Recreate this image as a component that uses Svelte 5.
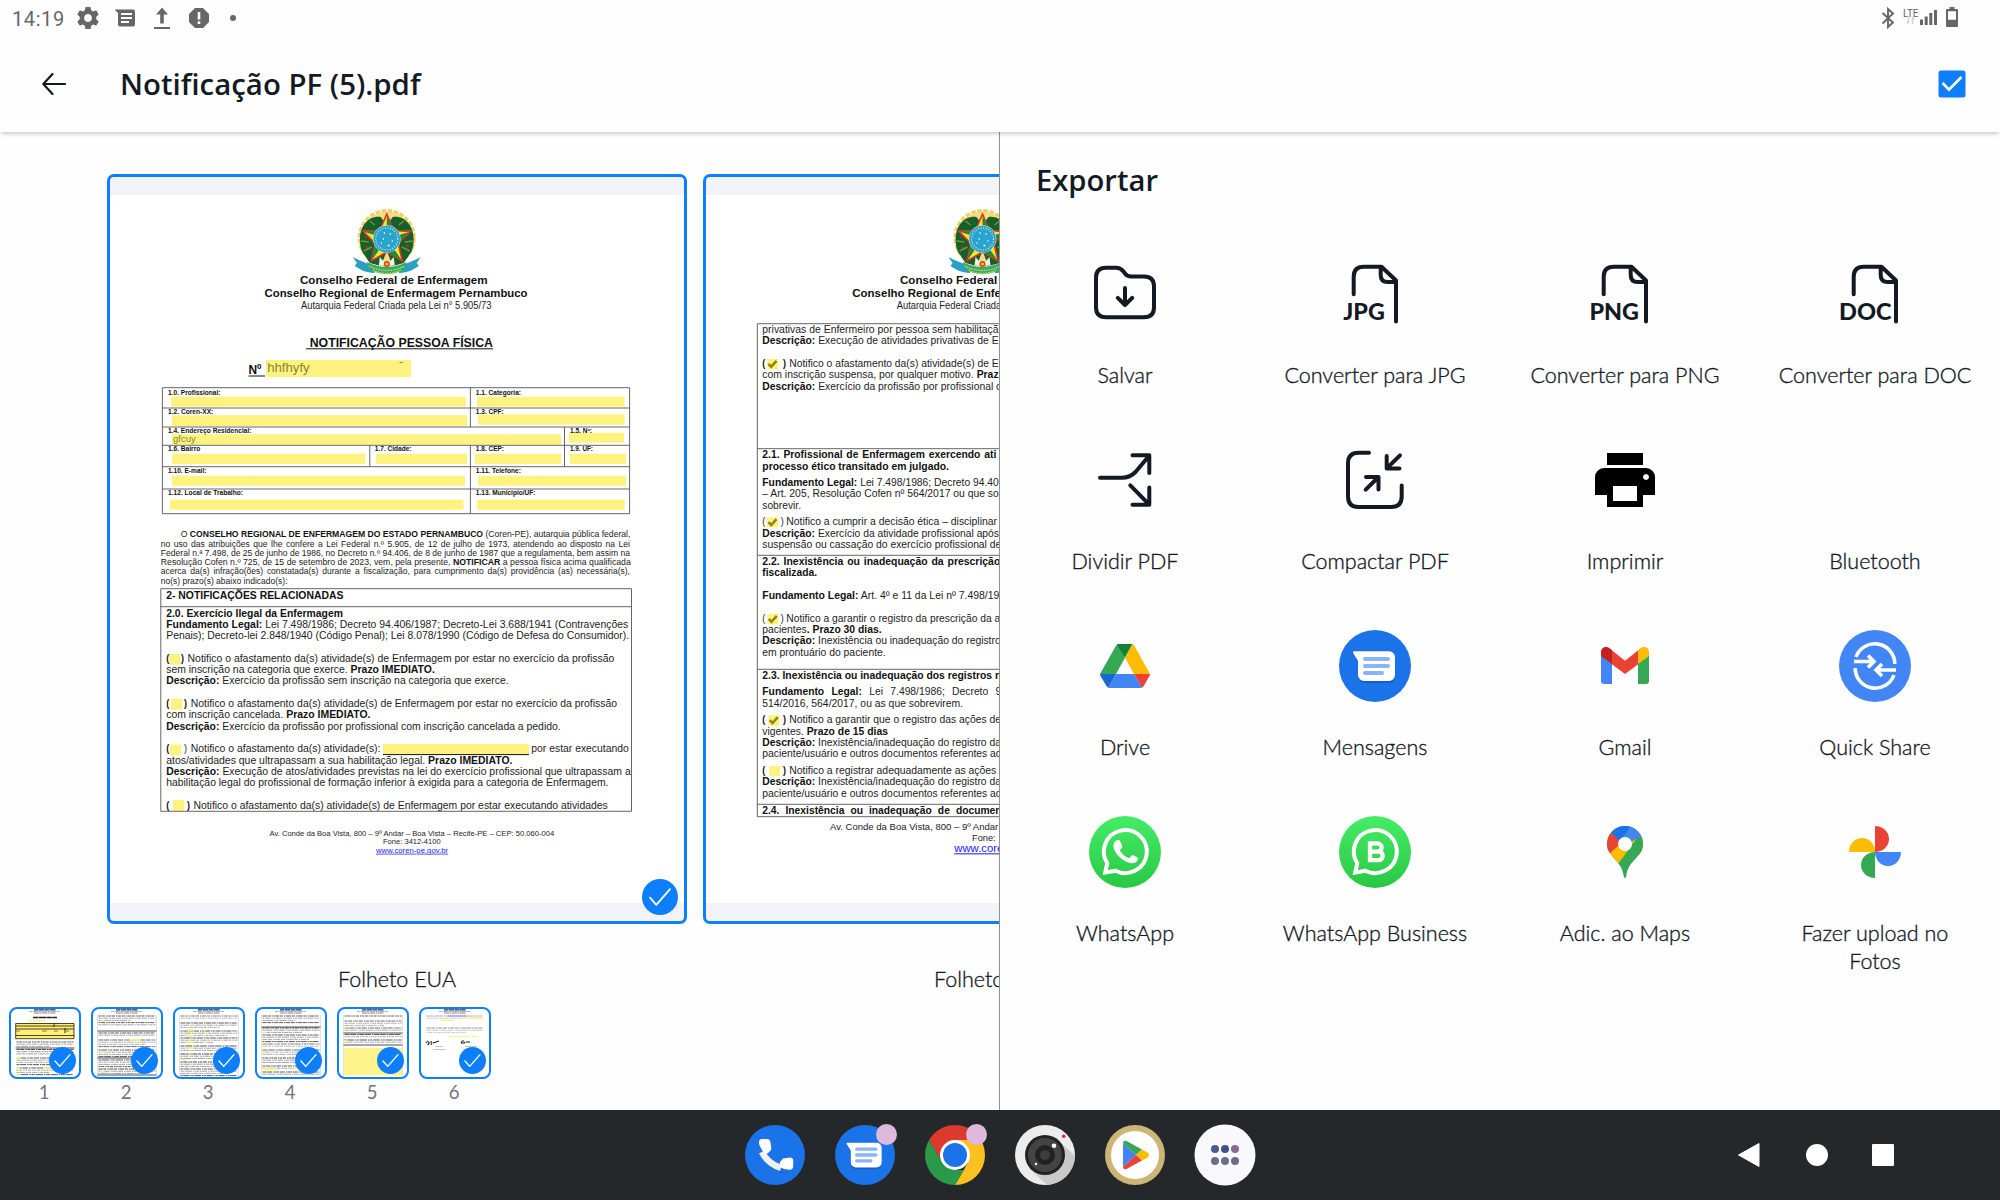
<script>
  // Text rows of a document page: [x, baseline, width, size, text]; *…* marks bold runs.
  const formLabels = [
    [168, 394.7, 52.5, '1.0. Profissional:'], [475.8, 394.7, 45.2, '1.1. Categoria:'],
    [168, 414.3, 45.3, '1.2. Coren-XX:'], [475.8, 414.3, 28, '1.3. CPF:'],
    [168, 433.3, 83.5, '1.4. Endereço Residencial:'], [570, 433.3, 22, '1.5. Nº:'],
    [168, 451.3, 32.3, '1.6. Bairro'], [374.8, 451.3, 36.7, '1.7. Cidade:'],
    [475.8, 451.3, 28.2, '1.8. CEP:'], [570, 451.3, 23, '1.9. UF:'],
    [168, 472.7, 38.4, '1.10. E-mail:'], [475.8, 472.7, 45.2, '1.11. Telefone:'],
    [168, 495.3, 75, '1.12. Local de Trabalho:'], [475.8, 495.3, 59.7, '1.13. Município/UF:']
  ].map(([x, y, w, t]) => [x, y, w, 6.4, `*${t}*`]);

  const pages = [
    {
      left: 107,
      dx: 0,
      texts: [
        [300, 283.7, 187.5, 11.3, '*Conselho Federal de Enfermagem*'],
        [264.5, 296.5, 263, 11.3, '*Conselho Regional de Enfermagem Pernambuco*'],
        [301, 309.3, 190.5, 11, 'Autarquia Federal Criada pela Lei n° 5.905/73'],
        [309.7, 346.7, 183.3, 12.4, '*NOTIFICAÇÃO PESSOA FÍSICA*'],
        [248.5, 373.5, 13, 12, '*Nº*'],
        ...formLabels,
        [180.7, 537.3, 449.7, 8.4, 'O *CONSELHO REGIONAL DE ENFERMAGEM DO ESTADO PERNAMBUCO* (Coren-PE), autarquia pública federal,'],
        [160.8, 546.7, 469.2, 8.4, 'no uso das atribuições que lhe confere a Lei Federal n.º 5.905, de 12 de julho de 1973, atendendo ao disposto na Lei', 1],
        [160.8, 556, 469.2, 8.4, 'Federal n.ª 7.498, de 25 de junho de 1986, no Decreto n.º 94.406, de 8 de junho de 1987 que a regulamenta, bem assim na'],
        [160.8, 565, 470, 8.4, 'Resolução Cofen n.º 725, de 15 de setembro de 2023, vem, pela presente, *NOTIFICAR* a pessoa física acima qualificada'],
        [160.8, 574.3, 469.2, 8.4, 'acerca da(s) infração(ões) constatada(s) durante a fiscalização, para cumprimento da(s) providência (as) necessária(s),', 1.5],
        [160.8, 584, 126.7, 8.4, 'no(s) prazo(s) abaixo indicado(s):'],
        [166.2, 598.7, 177.2, 10.4, '*2- NOTIFICAÇÕES RELACIONADAS*'],
        [166.2, 616.7, 176.8, 10.4, '*2.0. Exercício Ilegal da Enfermagem*'],
        [166.2, 627.7, 462, 10.4, '*Fundamento Legal:* Lei 7.498/1986; Decreto 94.406/1987; Decreto-Lei 3.688/1941 (Contravenções'],
        [166.2, 639, 463, 10.4, 'Penais); Decreto-lei 2.848/1940 (Código Penal); Lei 8.078/1990 (Código de Defesa do Consumidor).'],
        [166.2, 662, 3, 10.4, '*(*'], [181, 662, 3, 10.4, '*)*'],
        [187.6, 662, 426.7, 10.4, 'Notifico o afastamento da(s) atividade(s) de Enfermagem por estar no exercício da profissão'],
        [166.2, 673, 268.6, 10.4, 'sem inscrição na categoria que exerce. *Prazo IMEDIATO.*'],
        [166.2, 684.3, 342.5, 10.4, '*Descrição:* Exercício da profissão sem inscrição na categoria que exerce.'],
        [166.2, 707, 3, 10.4, '*(*'], [184, 707, 3, 10.4, '*)*'],
        [190.7, 707, 426.3, 10.4, 'Notifico o afastamento da(s) atividade(s) de Enfermagem por estar no exercício da profissão'],
        [166.2, 718.3, 204.3, 10.4, 'com inscrição cancelada. *Prazo IMEDIATO.*'],
        [166.2, 730, 394.5, 10.4, '*Descrição:* Exercício da profissão por profissional com inscrição cancelada a pedido.'],
        [166.2, 752.3, 3, 10.4, '*(*'], [184, 752.3, 3, 10.4, ')'],
        [190.7, 752.3, 189.8, 10.4, 'Notifico o afastamento da(s) atividade(s):'],
        [531.3, 752.3, 97.5, 10.4, 'por estar executando'],
        [166.2, 763.7, 346.3, 10.4, 'atos/atividades que ultrapassam a sua habilitação legal. *Prazo IMEDIATO.*'],
        [166.2, 774.7, 464.5, 10.4, '*Descrição:* Execução de atos/atividades previstas na lei do exercício profissional que ultrapassam a'],
        [166.2, 786.3, 442.3, 10.4, 'habilitação legal do profissional de formação inferior à exigida para a categoria de Enfermagem.'],
        [166.2, 809, 3, 10.4, '*(*'], [187, 809, 3, 10.4, '*)*'],
        [193.4, 809, 414.4, 10.4, 'Notifico o afastamento da(s) atividade(s) de Enfermagem por estar executando atividades'],
        [269.5, 836, 284.7, 7.6, 'Av. Conde da Boa Vista, 800 – 9º Andar – Boa Vista – Recife-PE – CEP: 50.060-004'],
        [383, 844.3, 57.6, 7.6, 'Fone: 3412-4100']
      ],
      links: [[376, 852.7, 72, 7.6, 'www.coren-pe.gov.br']],
      highlights: [
        [266, 360, 145, 17],
        [171.2, 396.7, 294.6, 10], [477, 396.7, 147.6, 10],
        [172, 415.3, 295, 10.7], [478, 414.3, 146.6, 10.4],
        [172, 434.3, 389, 10.3], [569, 432.7, 55, 10],
        [172, 453.7, 193.2, 10.3], [376, 453.7, 91, 10.3], [475, 453.7, 86, 10.3], [570, 453.7, 56, 10.3],
        [172, 475.7, 293, 10], [478, 475.7, 148, 10],
        [170, 499.7, 293.5, 10], [477, 499.7, 147.6, 10],
        [169.2, 654, 11.2, 10.7], [171, 699, 11, 10.7], [170, 744.7, 11.2, 10.3],
        [383, 744, 146, 10.3], [173, 800, 11.2, 10.7]
      ],
      typed: [[267.2, 372.3, 42.5, 13.5, 'hhfhyfy'], [173, 442, 22.7, 9.6, 'gfcuy'], [399, 366, 4, 12, '-']],
      ticks: [],
      rules: 'M306 348.8H493M248.5 376H265M383 754.6H529',
      grid: 'M162.4 387.7H629.6V513.7H162.4ZM162.4 408H629.6M162.4 427H629.6M162.4 445.3H629.6M162.4 466.7H629.6M162.4 489H629.6M470.4 387.7V427M470.4 445.3V513.7M564.5 427V466.7M369.8 445.3V466.7M160.8 588.7H631.5V811.3H160.8ZM160.8 606.7H631.5'
    },
    {
      left: 703,
      dx: 595.7,
      texts: [
        [900, 283.7, 187.5, 11.3, '*Conselho Federal de Enfermagem*'],
        [852.3, 296.5, 266, 11.3, '*Conselho Regional de Enfermagem Pernambuco*'],
        [896.7, 309.3, 190.5, 11, 'Autarquia Federal Criada pela Lei n° 5.905/73'],
        [762.3, 333, 236.3, 10.4, 'privativas de Enfermeiro por pessoa sem habilitaçã'],
        [762.3, 344.3, 236.3, 10.4, '*Descrição:* Execução de atividades privativas de E'],
        [762.3, 367, 3, 10.4, '*(*'], [783, 367, 3, 10.4, '*)*'],
        [789.3, 367, 209.4, 10.4, 'Notifico o afastamento da(s) atividade(s) de E'],
        [762.3, 378.3, 236.3, 10.4, 'com inscrição suspensa, por qualquer motivo. *Praz*'],
        [762.3, 389.7, 239, 10.4, '*Descrição:* Exercício da profissão por profissional c'],
        [762.3, 458, 234, 10.4, '*2.1. Profissional de Enfermagem exercendo ati*', 1],
        [762.3, 469.7, 186.7, 10.4, '*processo ético transitado em julgado.*'],
        [762.3, 486, 236.5, 10.4, '*Fundamento Legal:* Lei 7.498/1986; Decreto 94.40'],
        [762.3, 497, 236.5, 10.4, '– Art. 205, Resolução Cofen nº 564/2017 ou que so'],
        [762.3, 508.7, 38.7, 10.4, 'sobrevir.'],
        [762.3, 525.3, 3, 10.4, '('], [780.7, 525.3, 3, 10.4, ')'],
        [786.3, 525.3, 210.7, 10.4, 'Notifico a cumprir a decisão ética – disciplinar'],
        [762.3, 536.7, 236.7, 10.4, '*Descrição:* Exercício da atividade profissional após'],
        [762.3, 548, 239, 10.4, 'suspensão ou cassação do exercício profissional de'],
        [762.3, 565, 238, 10.4, '*2.2. Inexistência ou inadequação da prescrição*', 1],
        [762.3, 576, 54.7, 10.4, '*fiscalizada.*'],
        [762.3, 599, 237, 10.4, '*Fundamento Legal:* Art. 4º e 11 da Lei nº 7.498/19'],
        [762.3, 622, 3, 10.4, '('], [780.7, 622, 3, 10.4, ')'],
        [786.3, 622, 214, 10.4, 'Notifico a garantir o registro da prescrição da a'],
        [762.3, 632.7, 119.4, 10.4, 'pacientes*. Prazo 30 dias.*'],
        [762.3, 644.3, 238.4, 10.4, '*Descrição:* Inexistência ou inadequação do registro'],
        [762.3, 655.7, 123.4, 10.4, 'em prontuário do paciente.'],
        [762.3, 678.7, 239, 10.4, '*2.3. Inexistência ou inadequação dos registros n*'],
        [762.3, 695.3, 239, 10.4, '*Fundamento Legal:* Lei 7.498/1986; Decreto 9', 4.5],
        [762.3, 706.7, 200.7, 10.4, '514/2016, 564/2017, ou as que sobrevirem.'],
        [762.3, 723.3, 3, 10.4, '*(*'], [783, 723.3, 3, 10.4, '*)*'],
        [789.3, 723.3, 211.7, 10.4, 'Notifico a garantir que o registro das ações de'],
        [762.3, 735, 125.7, 10.4, 'vigentes. *Prazo de 15 dias*'],
        [762.3, 746, 238.7, 10.4, '*Descrição:* Inexistência/inadequação do registro da'],
        [762.3, 757.3, 239.3, 10.4, 'paciente/usuário e outros documentos referentes ao'],
        [762.3, 774, 3, 10.4, '*(*'], [783, 774, 3, 10.4, '*)*'],
        [789.3, 774, 207, 10.4, 'Notifico a registrar adequadamente as ações'],
        [762.3, 785.3, 238.7, 10.4, '*Descrição:* Inexistência/inadequação do registro da'],
        [762.3, 797, 239.3, 10.4, 'paciente/usuário e outros documentos referentes ao'],
        [762.3, 814, 239.3, 10.4, '*2.4. Inexistência ou inadequação de documen*', 3.2],
        [830, 830.3, 168.3, 9, 'Av. Conde da Boa Vista, 800 – 9º Andar'],
        [972, 841, 23.7, 9, 'Fone:']
      ],
      links: [[954.3, 852.3, 49, 10.4, 'www.core']],
      highlights: [
        [767, 359, 11, 10], [767, 517.3, 11, 10], [767.3, 614, 11, 10.3],
        [768.3, 715.3, 11, 10.4], [769.3, 766, 10.7, 10]
      ],
      typed: [],
      ticks: [[767, 359], [767, 517.3], [767.3, 614], [768.3, 715.3]],
      rules: '',
      grid: 'M1002 323.7H757.3V816.7H1002M757.3 448.7H1002M757.3 555.3H1002M757.3 669.3H1002M757.3 804.3H1002'
    }
  ];

  const runs = (t) => t.split('*').map((text, i) => ({ text, bold: i % 2 === 1 })).filter((r) => r.text);

  // Thumbnails: bands of tiny text lines as [from, to, strokeWidth], plus highlighted areas.
  const thumbs = [
    { bands: [[33, 38, 0.9], [40.5, 46, 1], [49, 56, 0.9], [59, 66, 0.9]], rules: [39], marks: [[17, 11, 17, 1.6], [5, 48, 4, 2], [5, 58, 4, 2], [32, 58, 9, 1.8], [5, 65, 4, 2]], form: true },
    { bands: [[7, 16, 0.9], [24, 28, 0.9], [31, 38, 0.8], [41, 48, 0.9], [51, 58, 0.9], [60, 65, 1]], rules: [22, 49, 66], marks: [[8, 11, 3, 2], [36, 30, 12, 1.8], [7, 42, 4, 2], [7, 62, 4, 2]] },
    { bands: [[7, 10, 0.7], [14, 20, 0.9], [22, 27, 0.9], [29, 35, 0.9], [37, 42, 0.9], [45, 51, 1], [53, 58, 1], [60, 67, 0.9]], rules: [], marks: [[11, 20, 8, 1.8], [28, 20, 3, 1.8], [11, 26, 8, 1.8], [28, 26, 3, 1.8], [11, 32, 8, 1.8], [28, 32, 3, 1.8], [11, 38, 8, 1.8], [7, 50, 3, 2]] },
    { bands: [[7, 15, 0.9], [19, 24, 1], [26, 33, 0.9], [35, 39, 0.7], [41, 46, 0.8], [49, 55, 1], [57, 61, 0.9], [63, 67, 0.9]], rules: [18], marks: [[5, 23, 4, 1.5], [5, 36, 4, 1.5], [5, 42, 4, 1.5], [6, 59, 14, 2.4], [36, 59, 8, 1.6]] },
    { bands: [[7, 9, 0.9], [12, 17, 0.8], [19, 23, 0.8], [25.5, 29, 0.9], [31, 35, 0.9]], rules: [24, 36], marks: [[5, 17, 3, 1.8], [5, 31, 3, 1.8], [5, 39, 58, 27.5]] },
    { bands: [[7, 10, 0.5], [19, 25, 0.6]], rules: [], marks: [[40, 8.5, 22, 1.4], [19, 10.5, 14, 1.4], [28, 27, 20, 1.2], [50, 27, 7, 1.2]], signed: true }
  ];
  const rows = ([from, to]) => {
    const out = [];
    for (let y = from; y < to; y += 2.2) out.push(y);
    return out;
  };

  const actions = [
    ['save', 'Salvar'], ['jpg', 'Converter para JPG'], ['png', 'Converter para PNG'], ['doc', 'Converter para DOC'],
    ['split', 'Dividir PDF'], ['compress', 'Compactar PDF'], ['print', 'Imprimir'], ['none', 'Bluetooth'],
    ['drive', 'Drive'], ['messages', 'Mensagens'], ['gmail', 'Gmail'], ['share', 'Quick Share'],
    ['whatsapp', 'WhatsApp'], ['business', 'WhatsApp Business'], ['maps', 'Adic. ao Maps'], ['photos', 'Fazer upload no Fotos']
  ];
  const fileText = { jpg: ['JPG', 4.3, 41.5], png: ['PNG', 0.4, 49.5], doc: ['DOC', 0, 52.5] };
</script>

{#snippet tick(cls)}
  <svg class={cls} viewBox="0 0 36 36"><circle cx="18" cy="18" r="18" fill="#0d7ffd" /><path d="M8 18.7 14.3 25.8 28 10.2" fill="none" stroke="#fff" stroke-width="1.8" stroke-linecap="round" stroke-linejoin="round" /></svg>
{/snippet}

{#snippet crest()}
  <!-- drawn around its own origin, the centre of the star -->
  <circle r="26.5" cy="-1" fill="#f5dc85" />
  <circle r="27.5" cy="-1" fill="none" stroke="#f1cf63" stroke-width="3" stroke-dasharray="4.6 1.6" />
  <path d="M-6-22C-22-24-31-6-25 12L-17 24-6 27 0 12 6 27 17 24 25 12C31-6 22-24 6-22L0-14Z" fill="#17602c" />
  <path d="M-17-18-12-14M-24-8-18-8M-26 2-18 3M-23 12-15 8M17-18 12-14M24-8 18-8M26 2 18 3M23 12 15 8" stroke="#6d9a34" stroke-width="1.4" />
  <path d="M-21 8h3M19 7h3M-22-2h2M20-3h2" stroke="#b3272b" stroke-width="2" />
  <path d="M0-25 7-8.5 23.500-7.500 11.500 4.500 15.500 22 0 13-15.500 22-11.500 4.500-23.500-7.500-7-8.500Z" fill="#f7e528" stroke="#d9352a" stroke-width="1.6" />
  <path d="M0-23V0L7-8.500ZM22-7 0 0 11.500 4.500ZM14.500 20.500 0 0V13ZM-14.500 20.500 0 0-11.500 4.500ZM-22-7 0 0-7-8.500Z" fill="#1d8a3f" />
  <circle r="13.800" fill="#e0ebb0" />
  <circle r="13.300" fill="#2aa3cf" />
  <circle r="11" fill="none" stroke="#c6e6e6" stroke-width="1.200" stroke-dasharray="1.200 1.400" />
  <path d="M-3-6h1.200M3-5h1.200M-4 0h1.200M1 6.500h1.800M5 2h1M-6 4h1" stroke="#fff" stroke-width="1.300" />
  <path d="M-34 18-28 21-16 26-12 34C-22 34-27 30-32 27L-30 24Z" fill="#2a9fc4" />
  <path d="M34 18 28 21 16 26 12 34C22 34 27 30 32 27L30 24Z" fill="#2a9fc4" />
  <path d="M-20 23Q0 33 20 23L17 31Q0 39-17 31Z" fill="#39a86b" />
  <path d="M-18 27Q0 36 18 27M-14 31Q0 38 14 31" fill="none" stroke="#c6e052" stroke-width="1.300" stroke-dasharray="1.500 1" />
  <path d="M-7 18-1 25-8 27ZM7 18 1 25 8 27Z" fill="#eef2ea" />
  <circle cy="25" r="3" fill="#e0402c" /><circle cy="25" r="1.300" fill="#f7e528" />
{/snippet}

{#snippet bubble()}
  <path d="M14 21.300H50a6 6 0 0 1 6 6V45a6 6 0 0 1-6 6H25a6 6 0 0 1-6-6V31Z" fill="#0b4aa8" opacity=".45" transform="translate(0 2)" />
  <path d="M14.800 21.300H50a6 6 0 0 1 6 6V45a6 6 0 0 1-6 6H25a6 6 0 0 1-6-6V31L14 22.800Q13.600 21.300 14.800 21.300Z" fill="#fff" />
  <path d="M26 29H49M26 36H49M26 43H43" stroke="#8ab4f8" stroke-width="4" stroke-linecap="round" />
{/snippet}

<div class="screen">
  <div class="status">
    <span class="clock">14:19</span>
    <svg class="notes" viewBox="70 0 170 36" fill="#666">
      <path fill-rule="evenodd" d="M85.500 7h5l.7 3.200 2 1.200 3-1.100 2.500 4.300-2.400 2.200v2.400l2.400 2.200-2.500 4.300-3-1.100-2 1.200-.7 3.200h-5l-.7-3.200-2-1.200-3 1.100-2.500-4.300 2.400-2.200v-2.400l-2.400-2.200 2.500-4.300 3 1.100 2-1.200ZM88 14a4 4 0 1 0 .01 0Z" />
      <path fill-rule="evenodd" d="M114.500 9.500H133a2 2 0 0 1 2 2V24.500a2 2 0 0 1-2 2H120a2 2 0 0 1-2-2V13ZM121 13v2h11v-2ZM121 17v2h11v-2ZM121 21v2h8v-2Z" />
      <path d="M162 7.500 168 14.500H163.800V23.500H160.200V14.500H156ZM154 27H170V29H154Z" />
      <path fill-rule="evenodd" d="M195 8h8l6 6v8l-6 6h-8l-6-6v-8ZM197.700 12v7.500h2.600V12ZM197.700 21.300v2.600h2.600v-2.600Z" />
      <circle cx="233" cy="18" r="3" />
    </svg>
    <svg class="system" viewBox="1876 0 88 36" fill="#666">
      <path d="M1882.500 13 1893 22.500 1888 27V9L1893 13.500 1882.500 23.500" fill="none" stroke="#666" stroke-width="1.900" />
      <text x="1903" y="17" font-family="Roboto" font-size="10" textLength="15.500">LTE</text>
      <path d="M1908.500 16v7M1907 21.500l1.500 2M1912.500 24v-7M1914 19l-1.500-2" fill="none" stroke="#d2d2d2" stroke-width="1.400" />
      <path d="M1920 19.500h3V25h-3ZM1924.700 16.500h3V25h-3ZM1929.300 13h3V25h-3ZM1934 10h3V25h-3Z" />
      <path fill-rule="evenodd" d="M1949.500 7h5v2h2.500a1 1 0 0 1 1 1v16a1 1 0 0 1-1 1h-10a1 1 0 0 1-1-1V10a1 1 0 0 1 1-1h2.500ZM1948 11.200V19.700h8V11.200Z" />
    </svg>
  </div>

  <header>
    <svg class="back" viewBox="0 0 24 22"><path d="M23 11H1.500M10.500 1 1.300 11 10.500 21" fill="none" stroke="#141a24" stroke-width="2.200" stroke-linecap="round" stroke-linejoin="round" /></svg>
    <h1>Notificação PF (5).pdf</h1>
    <svg class="checkbox" viewBox="0 0 28 28"><rect x=".5" y=".5" width="27" height="27" rx="2.500" fill="#0d7ffd" /><path d="M4.500 13 11 19.600 23.500 7" fill="none" stroke="#fff" stroke-width="2.700" /></svg>
  </header>

  <main>
    <section class="preview">
      <div class="cards">
        {#each pages as page}
          <figure>
            <div class="card">
              <svg class="page" viewBox="{page.left + 3} 195 574 708">
                <g transform="translate({386.8 + page.dx} 239)">{@render crest()}</g>
                {#each page.highlights as [x, y, w, h]}<rect {x} {y} width={w} height={h} fill="#fff27f" />{/each}
                <path d={page.grid} fill="none" stroke="#555" stroke-width=".9" />
                <path d={page.rules} fill="none" stroke="#111" stroke-width="1" />
                {#each page.texts as [x, y, w, size, text, gap]}
                  <text {x} {y} font-size={size} textLength={w} lengthAdjust="spacingAndGlyphs" word-spacing={gap ?? 0}>{#each runs(text) as r}<tspan class:bold={r.bold}>{r.text}</tspan>{/each}</text>
                {/each}
                {#each page.typed as [x, y, w, size, text]}<text class="typed" {x} {y} font-size={size} textLength={w} lengthAdjust="spacingAndGlyphs">{text}</text>{/each}
                {#each page.links as [x, y, w, size, text]}<text class="link" {x} {y} font-size={size} textLength={w} lengthAdjust="spacingAndGlyphs">{text}</text>{/each}
                {#each page.ticks as [x, y]}<path transform="translate({x} {y})" d="M1.500 4.800 4.200 7.800 9.500 1.800" fill="none" stroke="#93880c" stroke-width="2.600" />{/each}
              </svg>
              {@render tick('badge')}
            </div>
            <figcaption>Folheto EUA</figcaption>
          </figure>
        {/each}
      </div>
      <div class="thumbs">
        {#each thumbs as t, i}
          <div class="thumb">
            <div class="frame">
              <svg class="mini" viewBox="0 0 68 68">
                <path d="M23 .8H45" stroke="#333" stroke-width="1.200" stroke-dasharray="4 .5 6 .5" />
                <path d="M18 2.500H49" stroke="#9a9ab0" stroke-width=".8" stroke-dasharray="3 .8 5 .6" />
                <path d="M23 4H45" stroke="#666" stroke-width=".8" stroke-dasharray="5 .5 2 .5" />
                {#if t.form}
                  <path d="M22 8.500H46" stroke="#222" stroke-width="1.500" stroke-dasharray="5 .4 8 .4" />
                  <rect x="5" y="14.300" width="58" height="15.500" fill="#fdee78" />
                  <path d="M4.700 14.500H63V29.700H4.700ZM4.700 17H63M4.700 20H63M4.700 26.500H63M43 14V18" fill="none" stroke="#1c1a08" stroke-width=".8" />
                  <path d="M5 22H9M31 22H36M43 22H47M55 22H58" stroke="#55502a" stroke-width=".7" />
                  <path d="M54 19V24" stroke="#111" stroke-width=".9" />
                {:else if !t.signed}
                  <path d="M4.500 6V67M63.500 6V67" stroke="#ccc" stroke-width=".6" />
                {/if}
                {#each t.bands as band, b}
                  {#each rows(band) as y, n}
                    <path d="M5.500 {y}H{n % 3 === 2 ? 38 + ((b * 7) % 20) : 62.5}" stroke={n % 3 === 0 ? '#4a4a4a' : '#9c9c9c'} stroke-width={band[2]} stroke-dasharray="{2 + ((n + b + i) % 4)} .7 {3 + ((n * 2 + b) % 5)} 1 1.5 .6" />
                  {/each}
                {/each}
                {#each t.marks as [x, y, w, h]}<rect class="mark-area" {x} {y} width={w} height={h} />{/each}
                {#each t.rules as y}<path d="M4.500 {y}H63.500" stroke="#222" stroke-width=".8" />{/each}
                {#if t.signed}
                  <path d="M27 7H45" stroke="#8d8df0" stroke-width="1" />
                  <path d="M5 34c2-4 3-1 2 2 3-5 5-4 3 0M12 34 18 32M40 34c1-4 3-2 4 0l-4 0M45 33h4" fill="none" stroke="#111" stroke-width="1" />
                  <path d="M14 37.500h8M12 40.500h13M44 37.500h12" stroke="#aaa" stroke-width=".7" />
                {/if}
              </svg>
              {@render tick('mark')}
            </div>
            <span>{i + 1}</span>
          </div>
        {/each}
      </div>
    </section>

    <section class="export">
      <h2>Exportar</h2>
      <div class="grid">
        {#each actions as [kind, label]}
          <div class="action">
            <svg class="icon" viewBox="0 0 72 72">
              {#if kind === 'save'}
                <g class="line"><path d="M17 9.700H27.500C30.500 9.700 32.500 11 34.500 13.500L36 15.500C37.500 17.500 39.500 18.500 42 18.500H55Q65 18.500 65 28.500V49.300Q65 59.300 55 59.300H17Q7 59.300 7 49.300V19.700Q7 9.700 17 9.700Z" /><path d="M36 30V46M28.800 39.800 36 47 43.200 39.800" /></g>
              {:else if fileText[kind]}
                <g class="line"><path d="M14.700 36.300V18.700Q14.700 8.700 24.700 8.700H42.500L57 22.500V63.500M41.700 9V17Q41.700 24 48.700 24H56" /></g>
                <text class="kind" x={fileText[kind][1]} y="62.300" textLength={fileText[kind][2]} lengthAdjust="spacingAndGlyphs">{fileText[kind][0]}</text>
              {:else if kind === 'split'}
                <g class="line"><path d="M11 33.700H33Q41 33.700 46.500 28L60 12M43.500 11.300H60.300V29M41.300 41.300 60 60.300M60.300 43.500V60.700H43.500" /></g>
              {:else if kind === 'compress'}
                <g class="line"><path d="M30 8.700H19.500Q9 8.700 9 19.200V52.500Q9 63 19.500 63H52Q62.700 63 62.700 52.500V41.500M61 11.300 48.500 23.700M47.700 12V24.500H60.500M26.700 45.700 39 33.500M27 33H39.500V45.500" /></g>
              {:else if kind === 'print'}
                <path fill-rule="evenodd" d="M18 9H54V21H18ZM15 24H57a9 9 0 0 1 9 9V51H54V63H18V51H6V33a9 9 0 0 1 9-9ZM24 42V57H48V42ZM57 30a3 3 0 1 0 .01 0Z" />
              {:else if kind === 'drive'}
                <path d="M11 44 26.800 16Q28 14 29.500 14L36 27.700 27 44Z" fill="#34a853" />
                <path d="M29 14H43.500L36 27.700 28 14.500Z" fill="#188038" />
                <path d="M43.500 14Q44.600 14.300 45.500 16L61 44H45L36 27.700Z" fill="#fbbc04" />
                <path d="M11 44H27L19.300 57.700Q18 57 17.300 55.800L11.500 46Z" fill="#1967d2" />
                <path d="M27 44H45L53 57.500 51.500 58H20.500L19 57.700Z" fill="#4285f4" />
                <path d="M45 44H61L60.500 46 54.700 56Q54 57.200 53 57.700Z" fill="#ea4335" />
              {:else if kind === 'messages'}
                <circle cx="36" cy="36" r="36" fill="#1a73e8" />{@render bubble()}
              {:else if kind === 'gmail'}
                <path d="M12 25V51Q12 54 15 54H23V33Z" fill="#4285f4" />
                <path d="M60 25V51Q60 54 57 54H49V33Z" fill="#34a853" />
                <path d="M22.500 20 36 30.700 49.500 20V34L36 44 22.500 34Z" fill="#ea4335" />
                <path d="M12 26V22C12 17 17.500 15.500 21 18.500L23 20V34Z" fill="#c5221f" />
                <path d="M60 26V22C60 17 54.500 15.500 51 18.500L49 20V34Z" fill="#fbbc04" />
              {:else if kind === 'share'}
                <circle cx="36" cy="36" r="36" fill="#4285f4" />
                <path d="M17 27A20 20 0 0 1 55.800 34M55 45A20 20 0 0 1 16.200 38M15 31.500H33M29 25.500 35 31.500 29 37.500M57 40H39M43 34 37 40 43 46" fill="none" stroke="#fff" stroke-width="3.600" />
              {:else if kind === 'whatsapp' || kind === 'business'}
                <linearGradient id="wa-{kind}" x2="0" y2="1"><stop stop-color="#46ec66" /><stop offset="1" stop-color="#28c845" /></linearGradient>
                <circle cx="36" cy="36" r="36" fill="url(#wa-{kind})" />
                <path d="M18.300 47.300A21.500 21.500 0 1 1 26.500 54.700L16.200 56.600Z" fill="none" stroke="#fff" stroke-width="4" />
                {#if kind === 'whatsapp'}
                  <path d="M26.500 25Q28 23.700 30 24.200 31 24.500 31.500 26L33.200 30Q33.500 31 32.800 32L30.800 34.300Q34 40 40.200 42.300L42.700 39.500Q43.300 38.800 44.300 39.200L48.200 41.200Q49.300 41.800 49 43C48.300 46.500 44.500 48 41 47 33 44.700 27 39 24.800 32.500 24 29.500 24.500 26.800 26.500 25Z" fill="#fff" />
                {:else}
                  <path d="M31 27.300H38.500a4 4 0 0 1 0 8.300H31ZM31 35.600H39.500a4.200 4.200 0 0 1 0 8.500H31Z" fill="none" stroke="#fff" stroke-width="4.300" />
                {/if}
              {:else if kind === 'maps'}
                <clipPath id="pin"><path d="M36 10A18 18 0 0 1 54 28C54 41 39 44 37.300 60Q37 62 36 62T34.700 60C33 44 18 41 18 28A18 18 0 0 1 36 10Z" /></clipPath>
                <g clip-path="url(#pin)">
                  <path d="M0 0H72V72H0Z" fill="#34a853" />
                  <path d="M15 44 36 19 52 16 28 50Z" fill="#fbbc04" />
                  <path d="M14 38 14 14 36 24 20 38Z" fill="#ea4335" />
                  <path d="M36 28 41 5H58L54 19.500 52.500 20Z" fill="#4285f4" />
                  <path d="M43 8 31 26 22 16 30 4Z" fill="#1a73e8" />
                  <path d="M43 10 31 25 36 30 53 19 50 8Z" fill="#4285f4" />
                  <path d="M53 19 28 49 38 50 60 30Z" fill="#34a853" />
                </g>
                <circle cx="36" cy="28" r="7" fill="#fff" />
              {:else if kind === 'photos'}
                <path d="M36 10a14 13 0 0 1 0 26Z" fill="#ea4335" /><path d="M62 36a13 14 0 0 1-26 0Z" fill="#4285f4" />
                <path d="M36 62a14 13 0 0 1 0-26Z" fill="#34a853" /><path d="M10 36a13 14 0 0 1 26 0Z" fill="#fbbc04" />
              {/if}
            </svg>
            <span>{label}</span>
          </div>
        {/each}
      </div>
    </section>
  </main>

  <nav>
    <div class="dock">
      <svg viewBox="0 0 60 60"><circle cx="30" cy="30" r="30" fill="#1a73e8" /><path d="M16 31 26 41.500 38 47H46L36 48Z" fill="#0b4aa8" opacity=".4" /><path d="M17 27Q22 38 36 43" fill="none" stroke="#eef0f5" stroke-width="6.500" /><path d="M17 14H22.500Q25 14 25.300 16.500L26.300 23Q26.300 25 25 26.300L20.500 30Q13.500 21 14 17 14.200 14 17 14ZM38 33.500 45.500 32.500Q48 32.500 48.200 35V41.500Q48 44.500 45 44.800 40 45 34.500 42L35 37Z" fill="#fff" /></svg>
      <svg viewBox="0 0 60 60"><circle cx="30" cy="30" r="30" fill="#1a73e8" /><g transform="scale(.833)">{@render bubble()}</g><circle cx="51.500" cy="9.500" r="10.500" fill="#dfb9dd" /></svg>
      <svg viewBox="0 0 60 60">
        <clipPath id="disc"><circle cx="30" cy="30" r="30" /></clipPath>
        <g clip-path="url(#disc)"><path d="M0 0H60V15H30L17 37.500 4 15Z" fill="#dd3a2e" /><path d="M30 15H60V60H30L43 37.500Z" fill="#fcc021" /><path d="M4 15 17 37.500 30 45H39L30 60H0V15Z" fill="#2a9a48" /></g>
        <circle cx="30" cy="30" r="15" fill="#fff" /><circle cx="30" cy="30" r="12" fill="#1a73e8" /><circle cx="51.500" cy="9.500" r="10.500" fill="#dfb9dd" />
      </svg>
      <svg viewBox="0 0 60 60"><circle cx="30" cy="30" r="30" fill="#ececec" /><path d="M44 16 60 31A30 30 0 0 1 32 60L14 43Z" fill="#c9c9c9" /><circle cx="30" cy="30" r="20" fill="#222" /><circle cx="30" cy="30" r="17" fill="#444" /><circle cx="30" cy="30" r="10" fill="#222" /><circle cx="30" cy="30" r="5" fill="#3d3d3d" /><circle cx="39" cy="20.800" r="2.300" fill="#fff" /><circle cx="21" cy="39" r="1.200" fill="#fff" /><circle cx="48.700" cy="11.300" r="1.800" fill="#f2184a" /></svg>
      <svg viewBox="0 0 60 60"><circle cx="30" cy="30" r="30" fill="#cdb575" /><circle cx="30" cy="30" r="24" fill="#fff" /><path d="M18 18V42L31 30Z" fill="#4285f4" /><path d="M18 18Q18.500 14.500 22 16.300L37 24.500 31 30Z" fill="#34a853" /><path d="M37 24.500 42.500 27.500Q45.500 30 42.500 32.700L37 35.500 31 30Z" fill="#fbbc04" /><path d="M18 42Q18.500 45.500 22 43.700L37 35.500 31 30Z" fill="#ea4335" /></svg>
      <svg viewBox="0 0 60 60"><circle cx="30" cy="30" r="30.500" fill="#f9f9fd" /><circle cx="20" cy="24" r="4" fill="#475c93" /><circle cx="30" cy="24" r="4" fill="#3e5188" /><circle cx="40" cy="24" r="4" fill="#8b6a8c" /><circle cx="20" cy="36" r="4" fill="#6a6f86" /><circle cx="30" cy="36" r="4" fill="#6a6f86" /><circle cx="40" cy="36" r="4" fill="#6a6f86" /></svg>
    </div>
    <svg class="keys" viewBox="1737 1142 158 26" fill="#fff"><path d="M1759 1143.500V1166.500L1738.500 1155Z" stroke="#fff" stroke-linejoin="round" /><circle cx="1817" cy="1155" r="11" /><rect x="1872" y="1144" width="22" height="22" rx="1" /></svg>
  </nav>
</div>

<style>
  :global(body) { margin: 0; background: #fff; }
  .screen { width: 2000px; height: 1200px; display: flex; flex-direction: column; overflow: hidden; background: #fefefe; color: #141a24; font-family: Lato, 'Open Sans', sans-serif; }
  svg { display: block; flex: none; }
  .status { height: 36px; flex: none; display: flex; align-items: center; padding: 0 36px 0 12px; }
  .clock { width: 58px; font: 400 20px/36px Roboto, sans-serif; letter-spacing: 0.6px; color: #666; padding-top: 2px; }
  .notes { width: 170px; height: 36px; }
  .system { width: 88px; height: 36px; margin-left: auto; }
  header { height: 96px; flex: none; box-sizing: border-box; display: flex; align-items: center; padding: 0 34px 0 42px; position: relative; box-shadow: 0 3px 4px -1px rgba(0, 0, 0, 0.2); }
  .back { width: 24px; height: 22px; }
  h1 { margin: 0 0 0 54px; font: 600 29.400px/40px 'Open Sans', sans-serif; }
  .checkbox { width: 28px; height: 28px; margin-left: auto; }
  main { flex: none; height: 978px; display: flex; }
  .preview { width: 999px; box-sizing: border-box; overflow: hidden; display: flex; flex-direction: column; }
  .cards { display: flex; gap: 16px; padding: 42px 0 0 107px; }
  figure { margin: 0; flex: none; width: 580px; }
  .card { position: relative; box-sizing: border-box; width: 580px; height: 750px; padding: 18px 0; border: 3px solid #0d7ffd; border-radius: 7px; background: #f1f3f8; }
  .page { width: 574px; height: 708px; background: #fff; }
  .page text { font-family: 'Liberation Sans', Arial, sans-serif; fill: #1c1c1c; white-space: pre; }
  .page .bold { font-weight: 700; fill: #111; }
  .page .typed { fill: #8c8430; }
  .page .link { fill: #2020f5; text-decoration: underline; }
  .badge { position: absolute; right: 6px; bottom: 6px; width: 36px; height: 36px; }
  figcaption { margin-top: 41px; text-align: center; font-size: 21.500px; line-height: 28px; font-weight: 300; -webkit-text-stroke: 0.35px #141a24; }
  .thumbs { display: flex; gap: 10px; padding: 14px 0 0 9px; }
  .thumb { width: 72px; text-align: center; }
  .thumb span { display: block; padding-right: 2px; font-size: 18.500px; line-height: 26px; color: #70747e; font-weight: 400; }
  .frame { position: relative; box-sizing: border-box; height: 72px; border: 2px solid #0d7ffd; border-radius: 8px; overflow: hidden; background: #fff; }
  .mini { width: 68px; height: 68px; }
  .mark-area { fill: #fff27f; opacity: 0.9; }
  .mark { position: absolute; right: 3px; bottom: 3px; width: 27px; height: 27px; }
  .export { flex: 1; border-left: 1px solid #8f9194; padding-top: 26px; }
  h2 { margin: 0 0 0 36px; font: 600 29.200px/44px 'Open Sans', sans-serif; }
  .grid { margin-top: 56px; display: grid; grid-template-columns: repeat(4, 250px); grid-auto-rows: 186px; }
  .action { display: flex; flex-direction: column; align-items: center; }
  .icon { width: 72px; height: 72px; }
  .action span { margin-top: 31px; width: 204px; text-align: center; font-size: 21.500px; line-height: 28px; font-weight: 300; -webkit-text-stroke: 0.35px #141a24; }
  .line { fill: none; stroke: #141a24; stroke-width: 4; stroke-linecap: round; stroke-linejoin: round; }
  .kind { font: 900 22px Lato, 'Open Sans', sans-serif; fill: #141a24; }
  nav { flex: none; height: 90px; background: #25282a; display: grid; grid-template-columns: 1fr auto 1fr; align-items: center; }
  .dock { grid-column: 2; display: flex; gap: 30px; }
  .dock svg { width: 60px; height: 60px; overflow: visible; }
  .keys { width: 158px; height: 26px; justify-self: end; margin-right: 105px; }
</style>
